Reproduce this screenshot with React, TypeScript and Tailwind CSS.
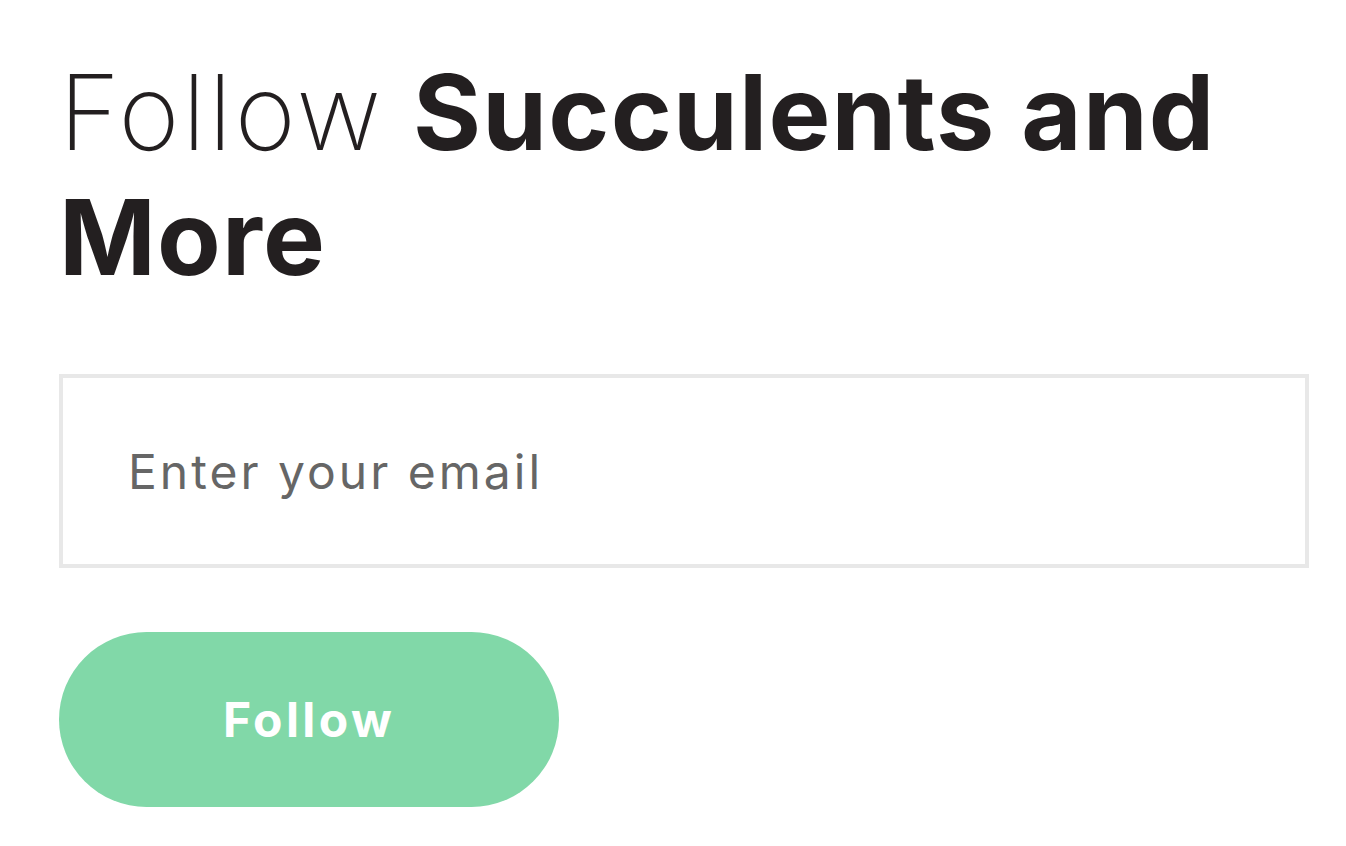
import { useState } from "react";

const App = () => {
  const [email, setEmail] = useState("");

  return (
    <div className="min-h-screen bg-white font-['Inter','Liberation_Sans',sans-serif] text-[#231f20]">
      <div className="px-[59px] pt-[50px]">
        <h1 className="w-[1250px] text-[104px] leading-[125px]">
          <span className="font-extralight tracking-[2.8px]">Follow</span>{" "}
          <span className="font-bold tracking-[1.2px]">Succulents and More</span>
        </h1>

        <input
          type="email"
          value={email}
          onChange={(e) => setEmail(e.target.value)}
          placeholder="Enter your email"
          className="mt-[74px] block w-[1250px] h-[194px] border-4 border-[#e8e8e8] bg-white pl-[65px] text-[48px] tracking-[3px] text-[#666666] placeholder:text-[#666666] outline-none"
        />

        <button className="mt-[64px] w-[500px] h-[175px] rounded-full bg-[#81d8a8] text-white text-[48px] font-bold tracking-[3.4px]">
          Follow
        </button>
      </div>
    </div>
  );
};

export default App;
